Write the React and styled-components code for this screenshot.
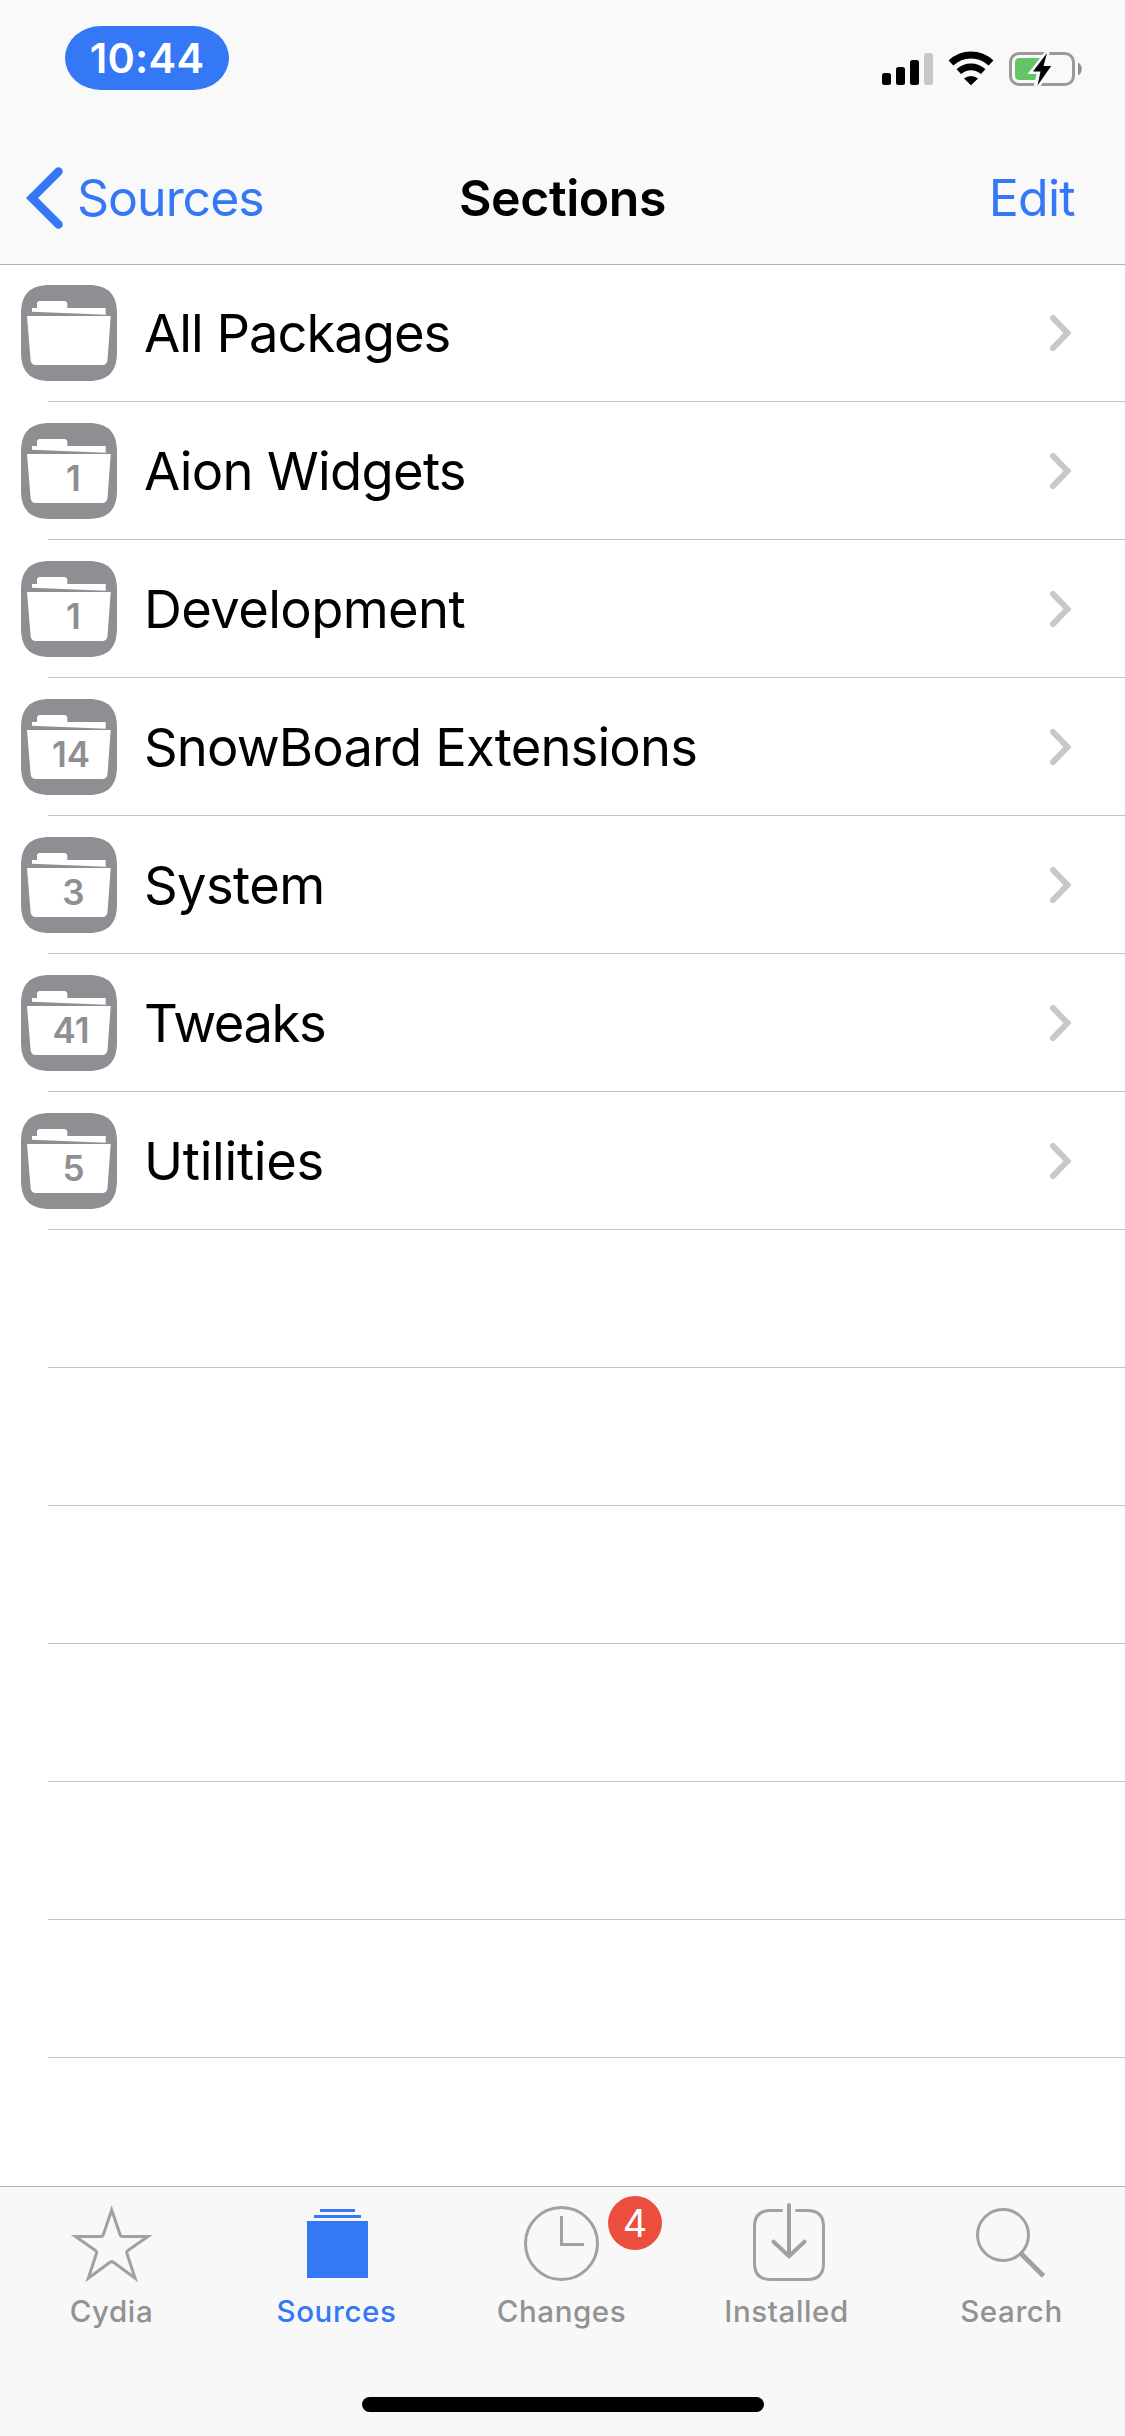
import React from 'react';
import styled, { createGlobalStyle } from 'styled-components';

const GlobalStyle = createGlobalStyle`
body {
  margin: 0;
  background: #fff;
  font-family: Inter, "Liberation Sans", sans-serif;
}
`;

const Screen = styled.div`
width: 1125px;
height: 2436px;
display: flex;
flex-direction: column;
overflow: hidden;
background: #fff;
`;

const Header = styled.header`
height: 264px;
flex: none;
position: relative;
z-index: 1;
background: #f9f9f9;
box-shadow: 0 1px 0 #b2b2b2;
`;

const StatusBar = styled.div`
height: 132px;
display: flex;
justify-content: space-between;
align-items: flex-start;
padding: 26px 43px 0 65px;
box-sizing: border-box;
`;

const TimePill = styled.div`
width: 164px;
height: 64px;
border-radius: 36px / 32px;
background: #3478f6;
color: #fff;
font-size: 41.5px;
font-weight: 600;
letter-spacing: 0.2px;
line-height: 64px;
text-align: center;
`;

const StatusIcons = styled.div`
display: flex;
gap: 15px;
padding-top: 25px;
`;

const NavBar = styled.nav`
height: 132px;
display: grid;
grid-template-columns: 1fr auto 1fr;
align-items: center;
padding: 0 26px;
box-sizing: border-box;
font-size: 50px;
line-height: 60px;
`;

const BackLink = styled.a`
display: flex;
align-items: center;
gap: 11px;
color: #3478f6;
letter-spacing: -1px;
`;

const Title = styled.h1`
margin: 0;
font-size: 50px;
font-weight: 600;
letter-spacing: -0.4px;
`;

const EditLink = styled.a`
padding-right: 24px;
color: #3478f6;
letter-spacing: -0.7px;
text-align: right;
`;

const List = styled.main`
flex: 1;
min-height: 0;
overflow: hidden;
`;

const Row = styled.div`
height: 138px;
display: flex;
align-items: center;
position: relative;
padding: 0 54px 0 21px;
box-sizing: border-box;

&::after {
  content: '';
  position: absolute;
  left: 48px;
  right: 0;
  bottom: 0;
  height: 1px;
  background: #c5c5c7;
}
`;

const RowLabel = styled.span`
flex: 1;
padding-left: 27px;
font-size: 52.5px;
line-height: 64px;
letter-spacing: ${props => props.$tracking}px;
color: #000;
`;

const TabBar = styled.footer`
height: 250px;
flex: none;
display: flex;
flex-direction: column;
align-items: center;
justify-content: space-between;
padding-bottom: 24px;
box-sizing: border-box;
border-top: 1px solid #b2b2b2;
background: #f8f8f8;
`;

const Tabs = styled.div`
width: 100%;
display: flex;
`;

const Tab = styled.a`
flex: 1;
display: flex;
flex-direction: column;
align-items: center;
position: relative;
padding-top: 13px;
color: ${props => props.$active ? '#3478f6' : '#a1a1a1'};
`;

const TabLabel = styled.span`
font-size: 29.5px;
font-weight: 500;
line-height: 36px;
letter-spacing: 0.6px;
margin-top: 3px;
padding-right: 2px;
color: ${props => props.$active ? '#3478f6' : '#929292'};
`;

const Badge = styled.span`
position: absolute;
left: 158px;
top: 9px;
width: 54px;
height: 54px;
border-radius: 50%;
background: #eb4e3d;
color: #fff;
font-size: 38px;
line-height: 54px;
text-align: center;
`;

const HomeIndicator = styled.div`
width: 402px;
height: 15px;
border-radius: 7.5px;
background: #000;
`;

const Signal = () => (
  <svg width="51" height="36" viewBox="0 0 51 36">
    <rect x="0" y="22" width="9" height="12" rx="2.5" />
    <rect x="14" y="16" width="9" height="18" rx="2.5" />
    <rect x="28" y="9" width="9" height="25" rx="2.5" />
    <rect x="42" y="2" width="9" height="32" rx="2.5" fill="#c7c7c7" />
  </svg>
);

const Wifi = () => (
  <svg width="46" height="36" viewBox="0 0 46 36">
    <path d="M3 12A29 29 0 0 1 43 12" fill="none" stroke="#000" strokeWidth="7" />
    <path d="M10.8 20.6A18 18 0 0 1 35.2 20.6" fill="none" stroke="#000" strokeWidth="6.6" />
    <path d="M16 27.6A10.5 10.5 0 0 1 30 27.6L23 34.2Z" />
  </svg>
);

const Battery = () => (
  <svg width="73" height="36" viewBox="0 0 73 36">
    <rect x="1.5" y="2.5" width="63" height="31" rx="8.5" fill="none" stroke="#999" strokeWidth="3" />
    <path d="M10.5 7H35V20L27 29H10.5Q6 29 6 24.5V11.5Q6 7 10.5 7Z" fill="#65c466" />
    <path d="M69 11.5C74 14 74 22 69 24.5Z" fill="#8e8e8e" />
    <path d="M36.500 0L18.500 23H27.500L24.500 36H31L46 12.500H37.500L41 0Z" fill="#f9f9f9" />
    <path d="M38 2L24 20.500H31.500L28.500 34.500L42.200 15H34.500Z" />
  </svg>
);

const BackChevron = () => (
  <svg width="40" height="64" viewBox="0 0 40 64">
    <path d="M32.500 5.500L6 32L32.500 58.500" fill="none" stroke="#3478f6" strokeWidth="8.500" strokeLinecap="round" />
  </svg>
);

const Disclosure = () => (
  <svg width="21" height="36" viewBox="0 0 21 36">
    <path d="M3 3L17.500 18L3 33" fill="none" stroke="#c7c7cc" strokeWidth="6" strokeLinecap="round" />
  </svg>
);

const Folder = ({ count }) => (
  <svg width="96" height="96" viewBox="0 0 96 96">
    <path
      d="M0 29C0 9 9 0 29 0H67C87 0 96 9 96 29V67C96 87 87 96 67 96H29C9 96 0 87 0 67Z"
      fill="#8e8e93"
    />
    <path d="M11 23H16V19Q16 16 19 16H43Q46.300 16 46.300 19V23H84.700V29.700L11 26.700Z" fill="#fff" />
    <path d="M6 31H89.700L86.500 75Q86 80 81 80H15Q10 80 9.600 75Z" fill="#fff" />
    {count && (
      <text
        x={count > 9 ? 50 : 52.5}
        y="68"
        fill="#8e8e93"
        fontSize="35"
        fontWeight="600"
        textAnchor="middle"
      >
        {count}
      </text>
    )}
  </svg>
);

const TabIcon = ({ children }) => (
  <svg width="91" height="90" viewBox="0 0 91 90" fill="none" stroke="currentColor" strokeWidth="3">
    {children}
  </svg>
);

const sections = [
  { name: 'All Packages', tracking: -1 },
  { name: 'Aion Widgets', count: 1, tracking: -0.7 },
  { name: 'Development', count: 1, tracking: -0.6 },
  { name: 'SnowBoard Extensions', count: 14, tracking: -0.85 },
  { name: 'System', count: 3, tracking: -0.6 },
  { name: 'Tweaks', count: 41, tracking: -1.4 },
  { name: 'Utilities', count: 5, tracking: -0.3 },
];

const emptyRows = [1, 2, 3, 4, 5, 6];

const tabs = [
  {
    name: 'Cydia',
    icon: (
      <path
        d="M44.700 10L36.200 35Q35.700 36.500 34 36.500H8.500L28.500 50.500Q30 51.500 29.500 53.300L21.300 78.300L43 62.300Q44.700 61 46.400 62.300L68.100 78.300L59.900 53.300Q59.400 51.500 60.900 50.500L80.900 36.500H55.400Q53.700 36.500 53.200 35Z"
        strokeMiterlimit="10"
      />
    ),
  },
  {
    name: 'Sources',
    active: true,
    icon: (
      <g fill="currentColor" stroke="none">
        <rect x="28" y="9" width="35" height="3" />
        <rect x="22" y="15" width="47" height="3" />
        <rect x="15" y="21" width="61" height="57" />
      </g>
    ),
  },
  {
    name: 'Changes',
    badge: 4,
    icon: (
      <>
        <circle cx="44.5" cy="43.5" r="36" />
        <path d="M44.500 16V44.500H67" />
      </>
    ),
  },
  {
    name: 'Installed',
    icon: (
      <>
        <path
          d="M39.500 10.500H28.500Q12.500 10.500 12.500 26.500V63.500Q12.500 79.500 28.500 79.500H65.500Q81.500 79.500 81.500 63.500V26.500Q81.500 10.500 65.500 10.500H54.500"
          strokeLinecap="round"
        />
        <path d="M47 5V56M31.500 41.700L47 56.300L62.500 41.700" strokeWidth="4" strokeLinecap="round" />
      </>
    ),
  },
  {
    name: 'Search',
    icon: (
      <>
        <circle cx="36" cy="35" r="25.500" />
        <path d="M54 53.500L76.500 76" strokeWidth="5" />
      </>
    ),
  },
];

export default function App() {
  return (
    <Screen>
      <GlobalStyle />
      <Header>
        <StatusBar>
          <TimePill>10:44</TimePill>
          <StatusIcons>
            <Signal />
            <Wifi />
            <Battery />
          </StatusIcons>
        </StatusBar>
        <NavBar>
          <BackLink>
            <BackChevron />
            <span>Sources</span>
          </BackLink>
          <Title>Sections</Title>
          <EditLink>Edit</EditLink>
        </NavBar>
      </Header>
      <List>
        {sections.map(section => (
          <Row key={section.name}>
            <Folder count={section.count} />
            <RowLabel $tracking={section.tracking}>{section.name}</RowLabel>
            <Disclosure />
          </Row>
        ))}
        {emptyRows.map(n => <Row key={n} />)}
      </List>
      <TabBar>
        <Tabs>
          {tabs.map(tab => (
            <Tab key={tab.name} $active={tab.active}>
              <TabIcon>{tab.icon}</TabIcon>
              <TabLabel $active={tab.active}>{tab.name}</TabLabel>
              {tab.badge && <Badge>{tab.badge}</Badge>}
            </Tab>
          ))}
        </Tabs>
        <HomeIndicator />
      </TabBar>
    </Screen>
  );
}
